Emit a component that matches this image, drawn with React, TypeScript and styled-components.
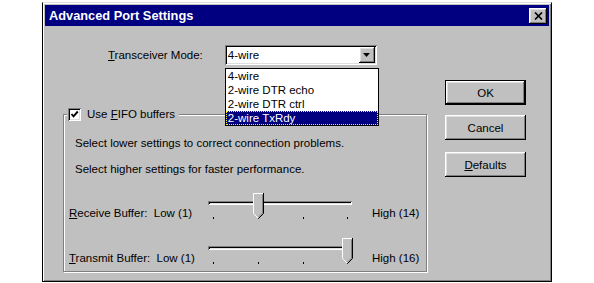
import React from "react";
import styled, { createGlobalStyle, css } from "styled-components";

const GlobalStyle = createGlobalStyle`
  html, body { margin: 0; padding: 0; background: #fff; }
  body {
    font-family: "Liberation Sans", Arial, sans-serif;
    font-size: 11.5px;
    color: #000;
  }
  * { box-sizing: border-box; }
`;

const raised = css`
  background: #c0c0c0;
  box-shadow: inset -1px -1px 0 #000, inset 1px 1px 0 #fff,
    inset -2px -2px 0 #808080, inset 2px 2px 0 #dfdfdf;
`;

const sunken = css`
  box-shadow: inset 1px 1px 0 #808080, inset -1px -1px 0 #fff,
    inset 2px 2px 0 #000, inset -2px -2px 0 #dfdfdf;
`;

const Page = styled.div`
  padding: 2px 0 0 42px;
`;

const Dialog = styled.div`
  width: 510px;
  height: 280px;
  background: #c0c0c0;
  border: 1px solid #000;
  border-top-color: #dfdfdf;
  box-shadow: inset 1px 1px 0 #fff, inset -1px -1px 0 #808080;
  padding: 2px;
  display: flex;
  flex-direction: column;
`;

const TitleBar = styled.div`
  height: 21px;
  background: #000080;
  color: #fff;
  font-weight: bold;
  font-size: 12.8px;
  display: flex;
  align-items: center;
  justify-content: space-between;
  padding: 0 2px 0 4px;
`;

const CloseButton = styled.div`
  ${raised};
  width: 18px;
  height: 16px;
  display: flex;
  align-items: center;
  justify-content: center;
`;

const Body = styled.div`
  display: grid;
  grid-template-columns: 382px 81px;
  column-gap: 18px;
  align-items: start;
`;

const LeftCol = styled.div`
  padding-left: 18px;
  display: flex;
  flex-direction: column;
`;

const ModeRow = styled.div`
  display: flex;
  align-items: center;
  gap: 22px;
  margin-top: 19px;
  padding-left: 45px;
  height: 20px;
  position: relative;
  z-index: 2;
`;

const Label = styled.span`
  line-height: 14px;
  white-space: nowrap;
`;

const HighLabel = styled(Label)`
  padding-left: 20px;
`;

const Combo = styled.div`
  position: relative;
  width: 152px;
  height: 20px;
  background: #fff;
  ${sunken};
  display: flex;
  align-items: center;
  justify-content: space-between;
  padding: 2px 2px 2px 3px;
`;

const DropButton = styled.div`
  ${raised};
  width: 16px;
  height: 16px;
  display: flex;
  align-items: center;
  justify-content: center;
`;

const List = styled.div`
  position: absolute;
  top: calc(100% + 3px);
  left: 0;
  width: 154px;
  background: #fff;
  border: 1px solid #000;
`;

const ListItem = styled.div<{ $selected?: boolean }>`
  height: 14px;
  line-height: 14px;
  padding-left: 2px;
  white-space: nowrap;
  ${(p) =>
    p.$selected &&
    css`
      background: #000080;
      color: #fff;
      outline: 1px dotted #ffff00;
      outline-offset: -1px;
    `}
`;

const Group = styled.fieldset`
  margin: 43px 0 0 0;
  width: 364px;
  min-width: 0;
  border: 1px solid #808080;
  box-shadow: inset 1px 1px 0 #fff, 1px 1px 0 #fff;
  padding: 0 0 6px 0;
  display: flex;
  flex-direction: column;
`;

const Legend = styled.legend`
  margin-left: 3px;
  padding: 0 4px 0 1px;
  background: #c0c0c0;
  display: flex;
  align-items: center;
  gap: 6px;
  height: 13px;
  line-height: 13px;
`;

const CheckBox = styled.div`
  width: 13px;
  height: 13px;
  background: #fff;
  ${sunken};
  display: flex;
  align-items: center;
  justify-content: center;
`;

const Info = styled.div<{ $gap: number }>`
  margin-top: ${(p) => p.$gap}px;
  padding-left: 11px;
  line-height: 14px;
  white-space: nowrap;
`;

const SliderRow = styled.div<{ $gap: number }>`
  margin-top: ${(p) => p.$gap}px;
  padding-left: 5px;
  height: 27px;
  display: grid;
  grid-template-columns: 139px 144px auto;
  align-items: end;
`;

const SliderBox = styled.div`
  position: relative;
  width: 144px;
  height: 27px;
  align-self: start;
`;

const Track = styled.div`
  margin-top: 8px;
  height: 4px;
  width: 144px;
  background: #c0c0c0;
  ${sunken};
`;

const Tick = styled.div`
  position: absolute;
  top: 24px;
  width: 1px;
  height: 2px;
  background: #000;
`;

const ThumbWrap = styled.div`
  position: absolute;
  top: 0;
  width: 11px;
  height: 26px;
  svg { display: block; }
`;

const ButtonCol = styled.div`
  padding-top: 54px;
  display: flex;
  flex-direction: column;
`;

const Button = styled.div<{ $default?: boolean; $gap?: number }>`
  ${raised};
  width: 81px;
  height: 25px;
  margin-top: ${(p) => p.$gap ?? 0}px;
  display: flex;
  align-items: center;
  justify-content: center;
  ${(p) =>
    p.$default &&
    css`
      border: 1px solid #000;
    `}
`;

const Slider = ({ value, max }: { value: number; max: number }) => {
  const frac = value / max;
  const center = 5 + frac * 134;
  const ticks = [5, 50, 95, 139];
  return (
    <SliderBox>
      <Track />
      {ticks.map((t) => (
        <Tick key={t} style={{ left: t }} />
      ))}
      <ThumbWrap style={{ left: Math.round(center - 5) }}>
        <svg width="11" height="26" viewBox="0 0 11 26">
          <path d="M0 0H11V20L5.5 25.5L0 20Z" fill="#c0c0c0" />
          <path d="M0.5 20.5V0.5H10" stroke="#fff" fill="none" />
          <path d="M0.5 20.5L5.2 25.2" stroke="#fff" fill="none" />
          <path d="M10.5 0V20.5L5.5 25.5" stroke="#000" fill="none" />
          <path d="M9.5 1.5V20L5.5 24" stroke="#808080" fill="none" />
        </svg>
      </ThumbWrap>
    </SliderBox>
  );
};

export default function App() {
  return (
    <>
      <GlobalStyle />
      <Page>
        <Dialog>
          <TitleBar>
            <span>Advanced Port Settings</span>
            <CloseButton>
              <svg width="9" height="8" viewBox="0 0 9 8">
                <path d="M1 0.5L8 7.5M8 0.5L1 7.5" stroke="#000" strokeWidth="1.7" />
              </svg>
            </CloseButton>
          </TitleBar>
          <Body>
            <LeftCol>
              <ModeRow>
                <Label>
                  <u>T</u>ransceiver Mode:
                </Label>
                <Combo>
                  <Label>4-wire</Label>
                  <DropButton>
                    <svg width="7" height="4" viewBox="0 0 7 4">
                      <polygon points="0,0 7,0 3.5,4" fill="#000" />
                    </svg>
                  </DropButton>
                  <List>
                    <ListItem>4-wire</ListItem>
                    <ListItem>2-wire DTR echo</ListItem>
                    <ListItem>2-wire DTR ctrl</ListItem>
                    <ListItem $selected>2-wire TxRdy</ListItem>
                  </List>
                </Combo>
              </ModeRow>
              <Group>
                <Legend>
                  <CheckBox>
                    <svg width="9" height="9" viewBox="0 0 9 9">
                      <path d="M1.5 4L3.5 6.3L7.8 1.5" stroke="#000" strokeWidth="1.9" fill="none" />
                    </svg>
                  </CheckBox>
                  <span>
                    Use <u>F</u>IFO buffers
                  </span>
                </Legend>
                <Info $gap={15}>Select lower settings to correct connection problems.</Info>
                <Info $gap={12}>Select higher settings for faster performance.</Info>
                <SliderRow $gap={17}>
                  <Label>
                    <u>R</u>eceive Buffer:&nbsp; Low (1)
                  </Label>
                  <Slider value={1} max={3} />
                  <HighLabel>High (14)</HighLabel>
                </SliderRow>
                <SliderRow $gap={18}>
                  <Label>
                    <u>T</u>ransmit Buffer:&nbsp; Low (1)
                  </Label>
                  <Slider value={3} max={3} />
                  <HighLabel>High (16)</HighLabel>
                </SliderRow>
              </Group>
            </LeftCol>
            <ButtonCol>
              <Button $default>OK</Button>
              <Button $gap={10}>Cancel</Button>
              <Button $gap={12}>
                <span>
                  <u>D</u>efaults
                </span>
              </Button>
            </ButtonCol>
          </Body>
        </Dialog>
      </Page>
    </>
  );
}
